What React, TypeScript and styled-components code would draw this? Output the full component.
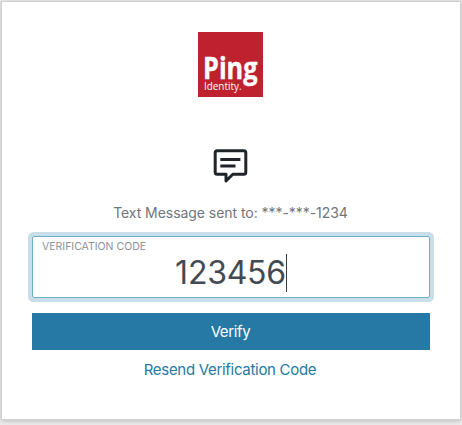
import React from "react";
import styled, { createGlobalStyle } from "styled-components";

const GlobalStyle = createGlobalStyle`
  * { box-sizing: border-box; }
  html, body { margin: 0; background: #ededed; overflow: hidden; }
  body { font-family: Inter, "Liberation Sans", sans-serif; }
`;

const Page = styled.main`
  height: 425px;
  padding: 2px 2px 6px;
`;

const Card = styled.section`
  height: 417px;
  padding: 30px;
  display: flex;
  flex-direction: column;
  align-items: center;
  background: #fff;
  box-shadow: 0 0 0 1px #d0d0d0, 0 1px 5px 1px rgba(0, 0, 0, 0.22);
`;

const Logo = styled.svg`
  width: 65px;
  height: 65px;
  flex: none;
  margin-right: 1px;
  overflow: visible;
  font-family: "Open Sans", sans-serif;
`;

const MessageIcon = styled.svg`
  width: 35px;
  height: 36px;
  flex: none;
  margin: 51px 1px 0 0;
`;

const Notice = styled.p`
  margin: 19px 1px 0 0;
  height: 20px;
  line-height: 20px;
  font-size: 14px;
  letter-spacing: -0.05px;
  color: #6f767d;
  white-space: nowrap;
`;

const Field = styled.label`
  width: 398px;
  height: 62px;
  flex: none;
  margin-top: 13px;
  padding: 4px 9px;
  border: 1px solid #6eacc8;
  border-radius: 2px;
  box-shadow: 0 0 0 4px #c8dee9;
`;

const FieldLabel = styled.span`
  display: block;
  height: 12px;
  line-height: 11px;
  font-size: 10.5px;
  color: #8d9197;
`;

const Code = styled.span`
  display: flex;
  justify-content: center;
  align-items: center;
  height: 40px;
  font-size: 32px;
  line-height: 40px;
  letter-spacing: -0.25px;
  color: #434a51;
`;

const Caret = styled.i`
  width: 1px;
  height: 38px;
  background: #343b43;
`;

const VerifyButton = styled.button`
  width: 398px;
  height: 37px;
  flex: none;
  margin-top: 15px;
  padding: 0 1px 0 0;
  border: 0;
  background: #2579a4;
  color: #fff;
  font: 15px/37px Inter, sans-serif;
  letter-spacing: -0.35px;
`;

const ResendLink = styled.a`
  margin: 10px 2px 0 0;
  line-height: 20px;
  font-size: 15px;
  letter-spacing: -0.3px;
  color: #2579a4;
  white-space: nowrap;
`;

export default function App() {
  return (
    <>
      <GlobalStyle />
      <Page>
        <Card>
          <Logo viewBox="0 0 65 65" role="img" aria-label="Ping Identity">
            <rect width="65" height="65" fill="#bf222e" />
            <text x="5" y="47" fill="#fff" stroke="#fff" strokeWidth="0.4" fontSize="29.5" fontWeight="700" textLength="54.5" lengthAdjust="spacingAndGlyphs">Ping</text>
            <text x="6" y="58" fill="#fff" fontSize="11.5" textLength="37.5" lengthAdjust="spacingAndGlyphs">Identity.</text>
          </Logo>
          <MessageIcon viewBox="0 0 35 36" fill="none" stroke="#20242a" strokeWidth="3" strokeLinejoin="round">
            <path d="M4.2 2.7H30.8Q32.8 2.7 32.8 4.7V24.2Q32.8 26.2 30.8 26.2H19.8L13 33V26.2H4.2Q2.2 26.2 2.2 24.2V4.7Q2.2 2.7 4.2 2.7Z" />
            <path d="M7.3 11.4H27.4M7.3 18H22.5" />
          </MessageIcon>
          <Notice>Text Message sent to: ***-***-1234</Notice>
          <Field>
            <FieldLabel>VERIFICATION CODE</FieldLabel>
            <Code>123456<Caret /></Code>
          </Field>
          <VerifyButton type="button">Verify</VerifyButton>
          <ResendLink>Resend Verification Code</ResendLink>
        </Card>
      </Page>
    </>
  );
}
